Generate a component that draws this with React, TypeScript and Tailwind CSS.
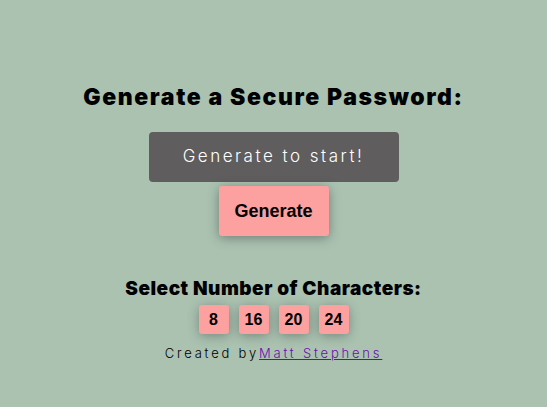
export default function App() {
  const counts = [8, 16, 20, 24];
  return (
    <div className="min-h-[407px] w-full bg-[#abc2b1] flex flex-col items-center pt-[83px] font-['Inter',sans-serif]">
      <h1 className="text-[23px] leading-[28px] font-black text-black tracking-[1.6px]">
        Generate a Secure Password:
      </h1>
      <div className="mt-[21px] w-[250px] h-[50px] rounded-[4px] bg-[#5f5d5e] flex items-center justify-center text-white text-[17px] font-light tracking-[2.5px]">
        Generate to start!
      </div>
      <button className="mt-[4px] w-[110px] h-[50px] rounded-[3px] bg-[#fda0a0] shadow-[0_2px_12px_rgba(0,0,0,0.35)] font-['Liberation_Sans',Arial,sans-serif] font-bold text-[18px] text-black">
        Generate
      </button>
      <h2 className="mt-[42px] text-[19px] leading-[22px] font-black text-black tracking-[0.5px]">
        Select Number of Characters:
      </h2>
      <div className="mt-[5px] flex gap-[10px]">
        {counts.map((n) => (
          <button
            key={n}
            className="w-[30px] h-[29px] rounded-[3px] bg-[#fda0a0] shadow-[0_2px_12px_rgba(0,0,0,0.3)] font-['Liberation_Sans',Arial,sans-serif] font-bold text-[16px] text-black"
          >
            {n}
          </button>
        ))}
      </div>
      <p className="mt-[10px] text-[13px] font-light tracking-[2.8px] text-black">
        Created by
        <a href="#" className="text-[#6a0dad] underline">Matt Stephens</a>
      </p>
    </div>
  );
}
